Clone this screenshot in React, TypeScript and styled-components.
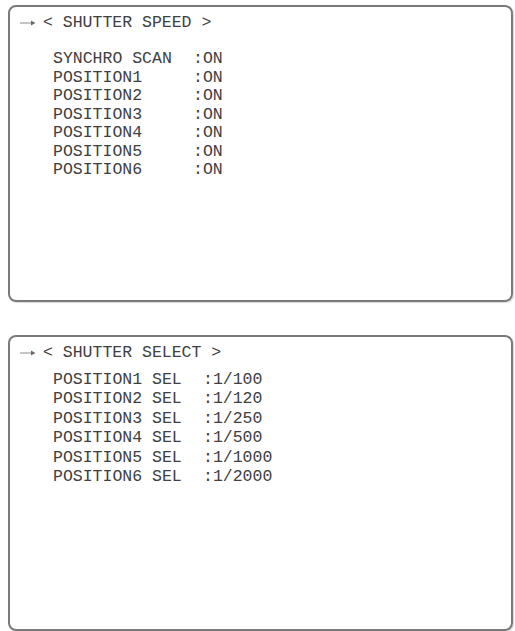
import React from 'react';
import styled, { createGlobalStyle } from 'styled-components';

const GlobalStyle = createGlobalStyle`
  html, body {
    margin: 0;
    padding: 0;
    background: #ffffff;
  }
`;

type Row = { label: string; value: string };

const speedRows: Row[] = [
  { label: 'SYNCHRO SCAN', value: 'ON' },
  { label: 'POSITION1', value: 'ON' },
  { label: 'POSITION2', value: 'ON' },
  { label: 'POSITION3', value: 'ON' },
  { label: 'POSITION4', value: 'ON' },
  { label: 'POSITION5', value: 'ON' },
  { label: 'POSITION6', value: 'ON' }
];

const selectRows: Row[] = [
  { label: 'POSITION1 SEL', value: '1/100' },
  { label: 'POSITION2 SEL', value: '1/120' },
  { label: 'POSITION3 SEL', value: '1/250' },
  { label: 'POSITION4 SEL', value: '1/500' },
  { label: 'POSITION5 SEL', value: '1/1000' },
  { label: 'POSITION6 SEL', value: '1/2000' }
];

const Page = styled.div`
  display: flex;
  flex-direction: column;
  gap: 33px;
  padding: 5px 2px 0 8px;
  font-family: 'Liberation Mono', 'DejaVu Sans Mono', monospace;
  font-size: 16.5px;
  color: #404040;
`;

const Screen = styled.div<{ $height: number }>`
  box-sizing: border-box;
  height: ${(p) => p.$height}px;
  border: 2px solid #7a7a7a;
  border-radius: 8px;
  padding: 7px 0 0 9px;
  box-shadow: 1px 1px 1px rgba(0, 0, 0, 0.15);
`;

const Title = styled.div`
  display: flex;
  align-items: center;
  height: 18px;
  line-height: 18px;
  white-space: pre;
`;

const Arrow = styled.svg`
  width: 24px;
  height: 10px;
  flex: none;
`;

const Menu = styled.div<{ $labelCols: number; $pitch: number; $top: number }>`
  display: grid;
  grid-template-columns: ${(p) => p.$labelCols * 10}px auto;
  grid-auto-rows: ${(p) => p.$pitch}px;
  line-height: ${(p) => p.$pitch}px;
  margin: ${(p) => p.$top}px 0 0 34px;
  white-space: pre;
`;

const Value = styled.span`
  &::before {
    content: ':';
  }
`;

const ArrowIcon = () => (
  <Arrow viewBox="0 0 24 10">
    <line x1="1" y1="5" x2="15" y2="5" stroke="#8a8a8a" strokeWidth="1" />
    <path d="M12 2.5 L16.5 5 L12 7.5 Z" fill="#6a6a6a" />
  </Arrow>
);

const MenuScreen: React.FC<{
  title: string;
  rows: Row[];
  labelCols: number;
  height: number;
  pitch: number;
  top: number;
}> = ({ title, rows, labelCols, height, pitch, top }) => (
  <Screen $height={height}>
    <Title>
      <ArrowIcon />
      {`< ${title} >`}
    </Title>
    <Menu $labelCols={labelCols} $pitch={pitch} $top={top}>
      {rows.map((r) => (
        <React.Fragment key={r.label}>
          <span>{r.label}</span>
          <Value>{r.value}</Value>
        </React.Fragment>
      ))}
    </Menu>
  </Screen>
);

const App: React.FC = () => (
  <>
    <GlobalStyle />
    <Page>
      <MenuScreen
        title="SHUTTER SPEED"
        rows={speedRows}
        labelCols={14}
        height={297}
        pitch={18.5}
        top={18}
      />
      <MenuScreen
        title="SHUTTER SELECT"
        rows={selectRows}
        labelCols={15}
        height={296}
        pitch={19.4}
        top={8}
      />
    </Page>
  </>
);

export default App;
